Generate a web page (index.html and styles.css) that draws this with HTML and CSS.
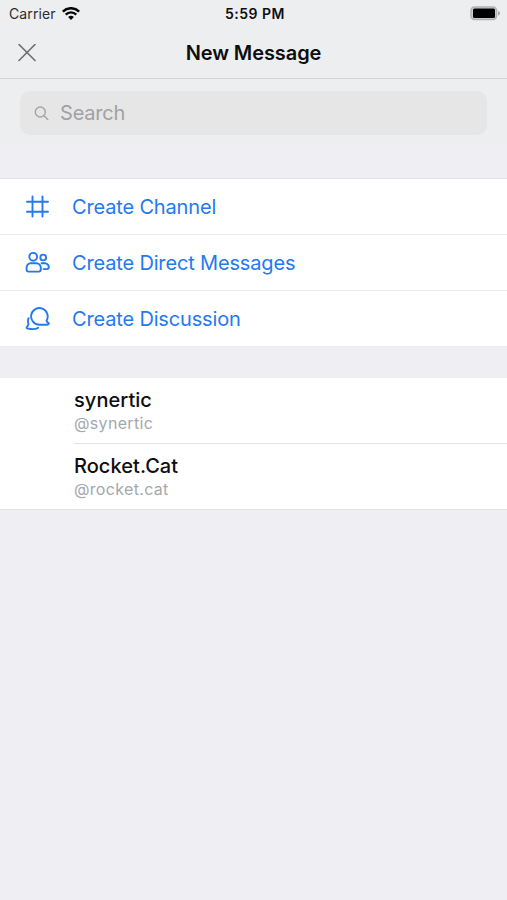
FILE: index.html
```html
<!DOCTYPE html>
<html lang="en">
<head>
<meta charset="utf-8">
<title>New Message</title>
<link rel="stylesheet" href="styles.css">
</head>
<body>
<header class="header">
  <div class="status">
    <div class="carrier"><span>Carrier</span>
      <svg class="wifi" width="18" height="14" viewBox="0 0 18 14" fill="none" stroke="#050505"><path d="M.8 4.600C5.300.1 12.700.1 17.200 4.600" stroke-width="2.500"/><path d="M3.700 7.600C6.700 4.600 11.300 4.600 14.300 7.600" stroke-width="2.300"/><path d="M6.100 10.100Q9 7.500 11.900 10.100L9 13Z" fill="#050505" stroke="none"/></svg>
    </div>
    <time class="time">5:59 PM</time>
    <svg class="battery" width="31" height="15" viewBox="0 0 31 15"><rect x="1" y="1" width="25.500" height="12.500" rx="3.500" fill="#cececf" stroke="#b0b1b3" stroke-width="1.500"/><rect x="3" y="2.500" width="22" height="9.500" rx="1.500" fill="#000"/><path d="M28 5Q30 5.500 30 7.200T28 9.500Z" fill="#a5a6a8"/></svg>
  </div>
  <div class="titlebar">
    <svg class="close" width="18" height="18" viewBox="0 0 18 18" fill="none" stroke="#6c6d70" stroke-width="1.600" stroke-linecap="round"><path d="M1 .5 17 16.500M17 .5 1 16.500"/></svg>
    <h1 class="title">New Message</h1>
  </div>
</header>
<div class="search-area">
  <div class="search">
    <svg width="15" height="15" viewBox="0 0 15 15" fill="none" stroke="#a3a4a5" stroke-width="1.400" stroke-linecap="round"><circle cx="6.300" cy="6" r="5"/><path d="m10 9.800 3.800 3.600"/></svg>
    <span class="placeholder">Search</span>
  </div>
</div>
<nav class="actions">
  <a class="action">
    <svg class="icon" width="26" height="26" viewBox="0 0 26 26"><path d="M8.500 2.500V22.500M18.500 2.500V22.500M3 7.700H24M3 17.700H24"/></svg>
    <span class="label">Create Channel</span>
  </a>
  <a class="action">
    <svg class="icon" width="26" height="26" viewBox="0 0 26 26"><circle cx="9.200" cy="6.800" r="3.900"/><circle cx="19.200" cy="7.500" r="2.900"/><path d="M5.800 13.300H13.300Q16.800 14.200 16.800 18.100V19.600Q16.800 21.600 14.800 21.600H4.600Q2.600 21.600 2.600 19.600V18.100Q2.600 14.200 5.800 13.300ZM17.600 13.300H21.700Q24.800 14.100 24.800 17.100Q24.800 19.100 22.800 19.100H19.500"/></svg>
    <span class="label">Create Direct Messages</span>
  </a>
  <a class="action">
    <svg class="icon" width="26" height="26" viewBox="0 0 26 26"><path d="M22.500 14.700A8.300 8.300 0 1 0 15.200 18.700H23.100Q25.300 18.300 24.600 17.100Q22.800 16.100 22.500 14.700ZM4.600 12.200Q3.400 15.100 4.500 18.100Q4 20 2.800 21.100Q2.100 22.400 4 22.600C7.600 23.300 11.600 23.500 14.200 21.700"/></svg>
    <span class="label">Create Discussion</span>
  </a>
</nav>
<main class="people">
  <div class="person">
    <div class="person-text"><span class="name">synertic</span><span class="handle">@synertic</span></div>
  </div>
  <div class="person">
    <div class="person-text"><span class="name">Rocket.Cat</span><span class="handle">@rocket.cat</span></div>
  </div>
</main>
</body>
</html>
```
FILE: styles.css
```css
* { box-sizing: border-box; }
body { margin: 0; min-height: 900px; background: #eeeef3; font-family: Inter, "Liberation Sans", sans-serif; color: #0d0e12; }
svg { display: block; flex: none; }
.header { height: 79px; background: #edeef0; border-bottom: 1px solid #d3d4d6; }
.status { display: grid; grid-template-columns: 1fr auto 1fr; align-items: center; height: 27px; padding: 0 6px 0 9px; }
.carrier { display: flex; align-items: center; gap: 6px; font-size: 14px; line-height: 18px; color: #2b2c2e; letter-spacing: .1px; }
.time { font-size: 14px; font-weight: 600; line-height: 18px; letter-spacing: .5px; }
.battery { justify-self: end; }
.titlebar { display: grid; grid-template-columns: 18px 1fr 18px; align-items: center; height: 51px; padding: 0 18px; }
.title { margin: 0; font-size: 20px; font-weight: 600; line-height: 26px; letter-spacing: -.08px; text-align: center; }
.search-area { height: 65px; padding: 12px 20px 9px; background: #edeef0; }
.search { display: flex; align-items: center; gap: 11px; height: 44px; padding-left: 14px; border-radius: 10px; background: #e6e6e7; }
.placeholder { font-size: 20px; line-height: 26px; letter-spacing: -.2px; color: #a0a1a3; }
.actions { margin-top: 34px; background: #fff; border-top: 1px solid #e3e3e6; }
.action { display: flex; align-items: center; gap: 22px; height: 56px; padding-left: 24px; border-bottom: 1px solid #ebebed; }
.icon { fill: none; stroke: #2579ee; stroke-width: 1.900; stroke-linecap: round; stroke-linejoin: round; }
.label { font-size: 20px; line-height: 26px; letter-spacing: -.16px; color: #2579ee; }
.people { margin-top: 31px; background: #fff; border-bottom: 1px solid #e3e3e6; }
.person { padding-left: 74px; }
.person-text { display: flex; flex-direction: column; height: 66px; padding-top: 10px; border-bottom: 1px solid #e3e3e6; }
.person:last-child .person-text { height: 65px; border-bottom: 0; }
.name { font-size: 20px; font-weight: 500; line-height: 25px; letter-spacing: .05px; }
.handle { font-size: 16px; line-height: 20px; letter-spacing: .33px; color: #a4a8ad; }
```
